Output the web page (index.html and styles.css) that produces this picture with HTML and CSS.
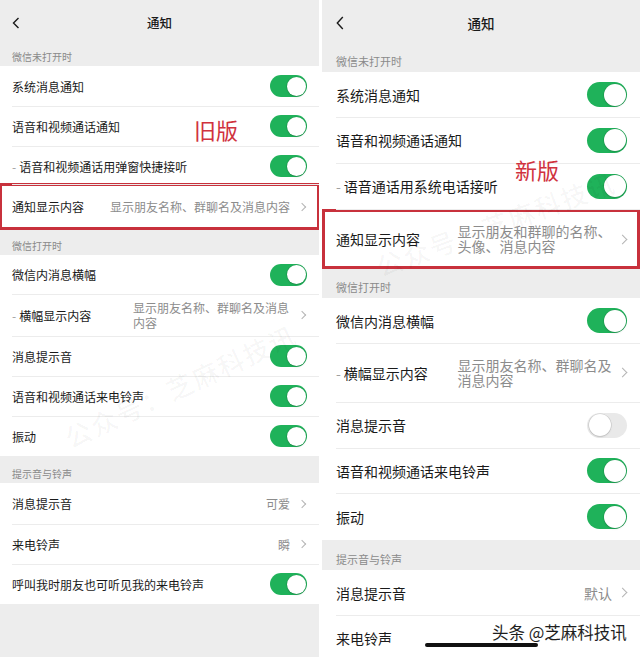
FILE: index.html
```html
<!DOCTYPE html>
<html lang="zh-CN">
<head>
<meta charset="utf-8">
<title>通知</title>
<link rel="stylesheet" href="styles.css">
</head>
<body>
<div class="screen">
  <section class="panel old">
    <header class="nav">
      <svg class="back" viewBox="0 0 8 12"><path d="M6.5 1 L1.5 6 L6.5 11" fill="none" stroke="#1a1a1a" stroke-width="1.4"/></svg>
      <h1>通知</h1>
    </header>
    <div class="label h21">微信未打开时</div>
    <div class="group">
      <div class="row h40"><span class="t">系统消息通知</span><i class="sw on"></i></div>
      <div class="row h40"><span class="t">语音和视频通话通知</span><i class="sw on"></i></div>
      <div class="row h40"><span class="t"><b class="dash">-</b>语音和视频通话用弹窗快捷接听</span><i class="sw on"></i></div>
      <div class="row h43 marked"><span class="t">通知显示内容</span><span class="v nowrap">显示朋友名称、群聊名及消息内容</span><i class="chev"></i></div>
    </div>
    <div class="label h26">微信打开时</div>
    <div class="group">
      <div class="row h39"><span class="t">微信内消息横幅</span><i class="sw on"></i></div>
      <div class="row h42"><span class="t"><b class="dash">-</b>横幅显示内容</span><span class="v wrap">显示朋友名称、群聊名及消息内容</span><i class="chev"></i></div>
      <div class="row h40"><span class="t">消息提示音</span><i class="sw on"></i></div>
      <div class="row h40"><span class="t">语音和视频通话来电铃声</span><i class="sw on"></i></div>
      <div class="row h40"><span class="t">振动</span><i class="sw on"></i></div>
    </div>
    <div class="label h27">提示音与铃声</div>
    <div class="group">
      <div class="row h41"><span class="t">消息提示音</span><span class="v nowrap">可爱</span><i class="chev"></i></div>
      <div class="row h40"><span class="t">来电铃声</span><span class="v nowrap">瞬</span><i class="chev"></i></div>
      <div class="row h40"><span class="t">呼叫我时朋友也可听见我的来电铃声</span><i class="sw on"></i></div>
    </div>
    <div class="tag">旧版</div>
    <div class="wm">公众号：芝麻科技讯</div>
  </section>

  <section class="panel new">
    <header class="nav">
      <svg class="back" viewBox="0 0 8 14"><path d="M6.8 1 L1.3 7 L6.8 13" fill="none" stroke="#1a1a1a" stroke-width="1.4"/></svg>
      <h1>通知</h1>
    </header>
    <div class="label h26">微信未打开时</div>
    <div class="group">
      <div class="row h45"><span class="t">系统消息通知</span><i class="sw on"></i></div>
      <div class="row h46"><span class="t">语音和视频通话通知</span><i class="sw on"></i></div>
      <div class="row h46"><span class="t"><b class="dash">-</b>语音通话用系统电话接听</span><i class="sw on"></i></div>
      <div class="row h60 marked"><span class="t">通知显示内容</span><span class="v wrap">显示朋友和群聊的名称、头像、消息内容</span><i class="chev"></i></div>
    </div>
    <div class="label h29">微信打开时</div>
    <div class="group">
      <div class="row h45"><span class="t">微信内消息横幅</span><i class="sw on"></i></div>
      <div class="row h59"><span class="t"><b class="dash">-</b>横幅显示内容</span><span class="v wrap">显示朋友名称、群聊名及消息内容</span><i class="chev"></i></div>
      <div class="row h46"><span class="t">消息提示音</span><i class="sw"></i></div>
      <div class="row h45"><span class="t">语音和视频通话来电铃声</span><i class="sw on"></i></div>
      <div class="row h47"><span class="t">振动</span><i class="sw on"></i></div>
    </div>
    <div class="label h30">提示音与铃声</div>
    <div class="group">
      <div class="row h45"><span class="t">消息提示音</span><span class="v nowrap">默认</span><i class="chev"></i></div>
      <div class="row h46"><span class="t">来电铃声</span></div>
    </div>
    <div class="tag">新版</div>
    <div class="wm">公众号：芝麻科技讯</div>
    <div class="credit">头条 @芝麻科技讯</div>
    <div class="homebar"></div>
  </section>
</div>
</body>
</html>
```

FILE: styles.css
```css
* { box-sizing: border-box; margin: 0; padding: 0; }
html, body { width: 640px; height: 657px; overflow: hidden; background: #fff; }
body { font-family: "Noto Sans CJK SC", "Noto Sans", sans-serif; color: #1a1a1a; }

.screen { display: flex; gap: 3px; height: 657px; }

.panel { position: relative; overflow: hidden; background: #ededed; display: flex; flex-direction: column; }
.panel.old { width: 319px; --pad: 12px; --pr: 12px; font-size: 12px; }
.panel.new { width: 318px; --pad: 14px; --pr: 13px; font-size: 14px; }

.nav { position: relative; display: flex; align-items: center; justify-content: center; flex: none; }
.old .nav { height: 45px; }
.new .nav { height: 46px; }
.nav h1 { font-weight: 500; }
.old .nav h1 { font-size: 12.5px; }
.new .nav h1 { font-size: 13.5px; }
.back { position: absolute; top: 50%; }
.old .back { left: 12px; width: 8px; height: 12px; margin-top: -6px; }
.new .back { left: 14px; width: 8px; height: 14px; margin-top: -7px; }

.label { flex: none; display: flex; align-items: flex-end; padding-left: var(--pad); color: #8a8a8a; }
.old .label { font-size: 10px; line-height: 14px; padding-bottom: 2px; }
.new .label { font-size: 11px; line-height: 15px; padding-bottom: 3px; }

.group { background: #fff; flex: none; }

.row { position: relative; display: flex; align-items: center; padding: 0 var(--pr) 0 var(--pad); }
.row + .row::before { content: ""; position: absolute; top: 0; left: var(--pad); right: 0; height: 1px; background: #ececec; }
.row .t { flex: none; white-space: nowrap; }
.dash { font-weight: 400; color: #a0a0a0; margin-right: 3px; }

.h21 { height: 21px; } .h26 { height: 26px; } .h27 { height: 27px; } .h29 { height: 29px; } .h30 { height: 30px; }
.h39 { height: 39px; } .h40 { height: 40px; } .h41 { height: 41px; } .h42 { height: 42px; } .h43 { height: 43px; }
.h45 { height: 45px; } .h46 { height: 46px; } .h47 { height: 47px; } .h59 { height: 59px; } .h60 { height: 60px; }

.v { margin-left: auto; color: #8c8c8c; }
.v.nowrap { white-space: nowrap; }
.old .v.wrap { width: 157px; line-height: 15px; }
.new .v.wrap { width: 154.5px; line-height: 15px; }

.chev { flex: none; display: block; border-right: 1.2px solid #b4b4b4; border-top: 1.2px solid #b4b4b4; transform: rotate(45deg); }
.old .chev { width: 6px; height: 6px; margin: 0 2px 0 9px; }
.new .chev { width: 7px; height: 7px; margin: 0 1px 0 7px; }

.sw { flex: none; display: block; margin-left: auto; position: relative; background: #e9e9e9; border-radius: 20px; }
.old .sw { width: 37px; height: 22px; }
.new .sw { width: 40px; height: 25px; }
.sw::after { content: ""; position: absolute; top: 1.5px; left: 1.5px; border-radius: 50%; background: #fff; box-shadow: 0 0 0 0.6px rgba(0,0,0,0.12), 0 1px 2px rgba(0,0,0,0.12); }
.old .sw::after { width: 19px; height: 19px; }
.new .sw::after { width: 22px; height: 22px; }
.sw.on { background: #1fb25a; }
.old .sw.on::after { left: 16.5px; }
.new .sw.on::after { left: 16.5px; }

.marked { outline: 3px solid #c8313c; }
.old .marked { outline-offset: -2px; margin-top: -2px; height: 45px; }
.new .marked { outline-offset: -3px; }

.tag { position: absolute; color: #d0323e; font-size: 22px; line-height: 26px; letter-spacing: 0; }
.old .tag { left: 194px; top: 116px; }
.new .tag { left: 193px; top: 156px; }

.wm { position: absolute; white-space: nowrap; font-size: 26px; font-weight: 500; color: rgba(0,0,0,0.04); transform-origin: left center; letter-spacing: 2px; }
.old .wm { left: 66px; top: 420px; transform: rotate(-25deg); }
.new .wm { left: 55px; top: 248px; transform: rotate(-20deg); }

.credit { position: absolute; left: 170px; top: 620px; font-size: 16.5px; line-height: 24px; color: #1e1e1e; text-shadow: 0 0 2px #fff; white-space: nowrap; }
.homebar { position: absolute; left: 103px; top: 643px; width: 113px; height: 4px; border-radius: 2px; background: #111; }
```
